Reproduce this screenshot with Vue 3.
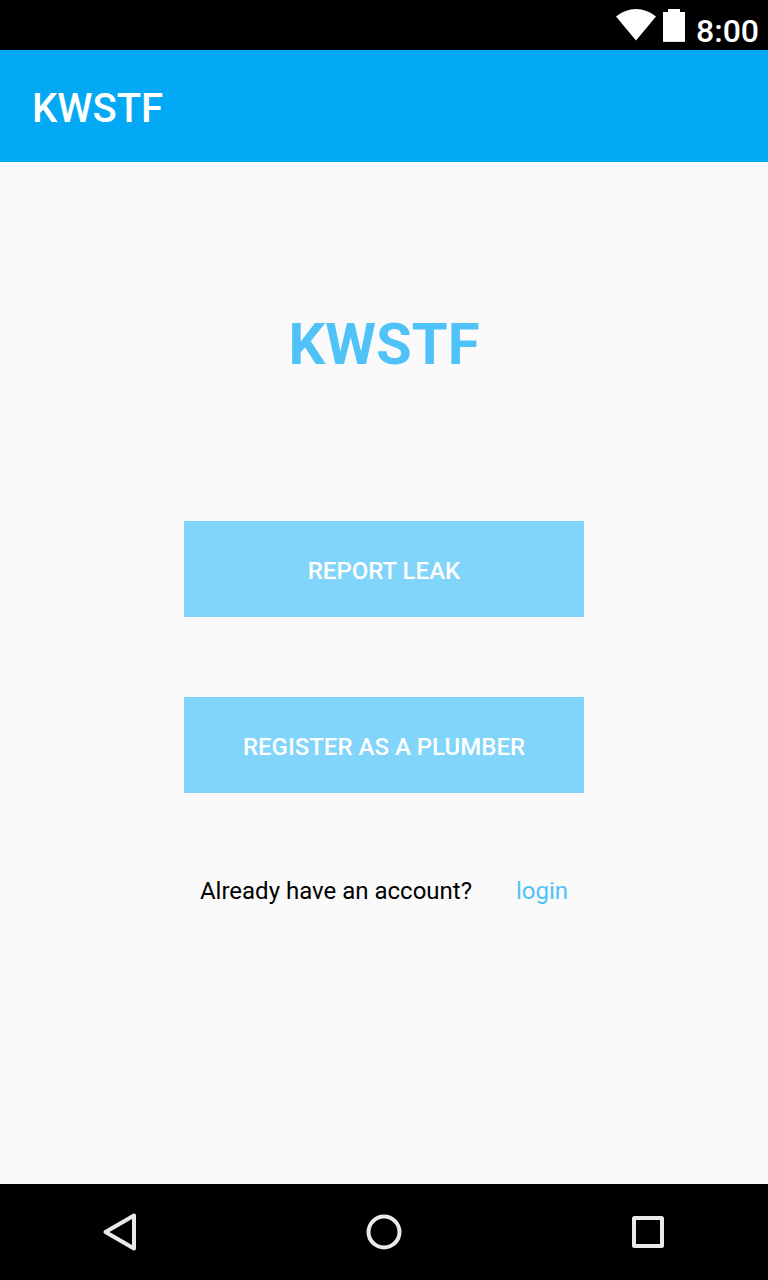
<script setup>
const actions = ['Report leak', 'Register as a plumber']
</script>

<template>
  <div class="screen">
    <div class="status">
      <svg class="wifi" viewBox="0 0 40 32" aria-hidden="true">
        <path d="M0 7.500Q9 0 20 0T40 7.500L20 31.500Z" fill="#fff" />
      </svg>
      <svg class="battery" viewBox="0 0 22 33" aria-hidden="true">
        <path d="M5 0H17V3H22V33H0V3H5Z" fill="#fff" />
        <path d="M0 32H22V33H0Z" fill="#ddd" />
      </svg>
      <span class="clock">8:00</span>
    </div>
    <header class="bar">KWSTF</header>
    <main class="content">
      <h1 class="title">KWSTF</h1>
      <div class="actions">
        <button v-for="label in actions" :key="label" type="button" class="action">{{ label }}</button>
      </div>
      <p class="account">
        <span>Already have an account?</span>
        <a href="#login" class="login">login</a>
      </p>
    </main>
    <nav class="nav">
      <button type="button" aria-label="Back">
        <svg viewBox="0 0 48 48"><path d="M9.500 24L38 7.500V40.500Z" /></svg>
      </button>
      <button type="button" aria-label="Home">
        <svg viewBox="0 0 48 48"><circle cx="24" cy="24" r="15.500" /></svg>
      </button>
      <button type="button" aria-label="Recent apps">
        <svg viewBox="0 0 48 48"><rect x="10" y="10" width="28" height="28" rx="0.500" /></svg>
      </button>
    </nav>
  </div>
</template>

<style>
body { margin: 0; }
</style>

<style scoped>
.screen {
  display: flex;
  flex-direction: column;
  min-height: 100vh;
  background: #fafafa;
  color: #000;
  font-family: Roboto, sans-serif;
}
.status {
  display: flex;
  justify-content: flex-end;
  height: 50px;
  padding-right: 9px;
  box-sizing: border-box;
  background: #000;
  color: #fff;
}
.wifi { width: 40px; height: 32px; margin-top: 9px; }
.battery { width: 22px; height: 33px; margin: 9px 11px 0 7px; }
.clock {
  padding-top: 12px;
  font-size: 32px;
  font-weight: 500;
  line-height: 38px;
}
.bar {
  display: flex;
  align-items: center;
  height: 112px;
  padding: 4px 32px 0;
  box-sizing: border-box;
  background: #03a9f4;
  color: #fff;
  font-size: 40px;
  font-weight: 500;
}
.content {
  display: flex;
  flex: 1;
  flex-direction: column;
  align-items: center;
  padding-top: 148px;
}
.title {
  margin: 0;
  color: #4fc3f7;
  font-size: 58px;
  font-weight: 700;
  line-height: 68px;
}
.actions {
  display: flex;
  flex-direction: column;
  gap: 80px;
  width: 400px;
  max-width: 100%;
  margin-top: 143px;
}
.action {
  height: 96px;
  padding: 4px 0 0;
  border: 0;
  background: #81d4fa;
  color: #fff;
  font: 500 24px Roboto, sans-serif;
  text-transform: uppercase;
}
.account {
  display: flex;
  gap: 44px;
  margin: 82px 0 0;
  font-size: 24px;
  line-height: 32px;
}
.login { color: #4fc3f7; text-decoration: none; }
.nav {
  display: flex;
  justify-content: center;
  gap: 216px;
  height: 96px;
  background: #000;
}
.nav button {
  display: flex;
  align-items: center;
  padding: 0;
  border: 0;
  background: none;
}
.nav svg {
  width: 48px;
  height: 48px;
  fill: none;
  stroke: #e8eaeb;
  stroke-width: 4;
  stroke-linejoin: round;
}
</style>
